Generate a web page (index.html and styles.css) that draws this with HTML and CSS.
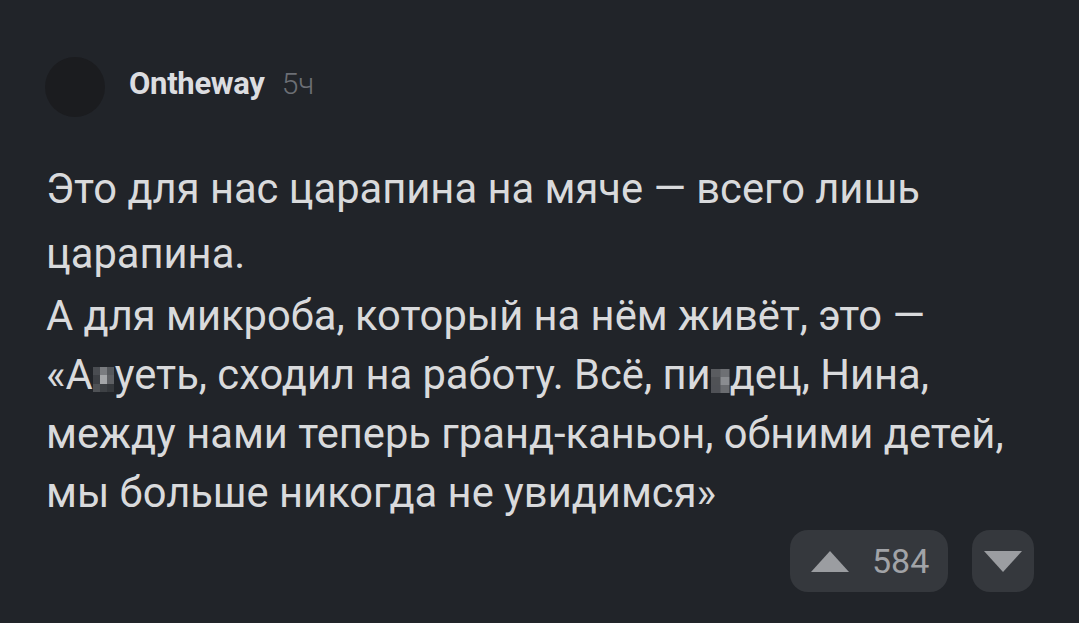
FILE: index.html
```html
<!DOCTYPE html>
<html lang="ru">
<head>
    <meta charset="UTF-8" />
    <meta name="viewport" content="width=device-width, initial-scale=1" />
    <title>Комментарий</title>
    <link rel="stylesheet" href="styles.css">
</head>
<body>
    <div class="comment">
        <div class="header">
            <div class="avatar"></div>
            <span class="author">Ontheway</span>
            <span class="time">5ч</span>
        </div>

        <div class="text">
            <p class="first">Это для нас царапина на мяче — всего лишь<br>царапина.</p>
            <p class="second">А для микроба, который на нём живёт, это —<br>«А<span class="censor"></span>уеть, сходил на работу. Всё, пи<span class="censor small"></span>дец, Нина,<br>между нами теперь гранд-каньон, обними детей,<br>мы больше никогда не увидимся»</p>
        </div>

        <div class="votes">
            <button class="vote up">
                <svg width="38" height="21" viewBox="0 0 38 21"><path d="M19 0 L38 21 L0 21 Z" fill="#9b9da1"/></svg>
                <span class="count">584</span>
            </button>
            <button class="vote down">
                <svg width="38" height="21" viewBox="0 0 38 21"><path d="M0 0 L38 0 L19 21 Z" fill="#9b9da1"/></svg>
            </button>
        </div>
    </div>
</body>
</html>
```

FILE: styles.css
```css
body {
    margin: 0;
    background-color: #212429;
    font-family: Roboto, "Noto Sans", Arial, sans-serif;
    color: #d9dadc;
    width: 1079px;
    height: 623px;
    overflow: hidden;
}
.comment {
    padding: 57px 45px 0 46px;
}
.header {
    display: flex;
    align-items: center;
    margin-left: -1px;
}
.avatar {
    width: 60px;
    height: 60px;
    border-radius: 50%;
    background-color: #1b1c1f;
    margin-right: 24px;
}
.author {
    font-size: 31px;
    font-weight: 700;
    letter-spacing: -0.3px;
    color: #dcdde0;
    margin-top: -7px;
}
.time {
    font-size: 30px;
    font-weight: 300;
    color: #6c6f75;
    margin-left: 17px;
    margin-top: -7px;
}
.text {
    margin-top: 39px;
    font-size: 41.7px;
}
.text p {
    margin: 0;
}
.first {
    line-height: 65px;
}
.second {
    line-height: 59px;
}
.censor {
    display: inline-block;
    width: 22px;
    height: 25px;
    vertical-align: -3px;
    background:
        linear-gradient(#4a4d52 33%, #3d4045 33% 66%, #4f5256 66%) 0 0 / 34% 100% no-repeat,
        linear-gradient(#7a7c80 33%, #a4a6a9 33% 66%, #3e4145 66%) 50% 0 / 34% 100% no-repeat,
        linear-gradient(#55585c 33%, #5e6064 33% 66%, #35383c 66%) 100% 0 / 34% 100% no-repeat;
}
.censor.small {
    width: 19px;
    height: 24px;
    vertical-align: -4px;
    background:
        linear-gradient(#5a5c60 33%, #505256 33% 66%, #4f5156 66%) 0 0 / 50% 100% no-repeat,
        linear-gradient(#6e7074 33%, #8a8c90 33% 66%, #6a6c70 66%) 100% 0 / 50% 100% no-repeat;
}
.votes {
    display: flex;
    justify-content: flex-end;
    gap: 24px;
    margin-top: 8px;
}
.vote {
    height: 62px;
    border: none;
    border-radius: 18px;
    background-color: #35383d;
    display: flex;
    align-items: center;
    padding: 0;
    cursor: pointer;
}
.vote.up {
    width: 158px;
    padding-left: 21px;
}
.vote.down {
    width: 62px;
    justify-content: center;
}
.count {
    font-family: Roboto, Arial, sans-serif;
    font-size: 34px;
    color: #a1a3a7;
    margin-left: 23px;
}
```
